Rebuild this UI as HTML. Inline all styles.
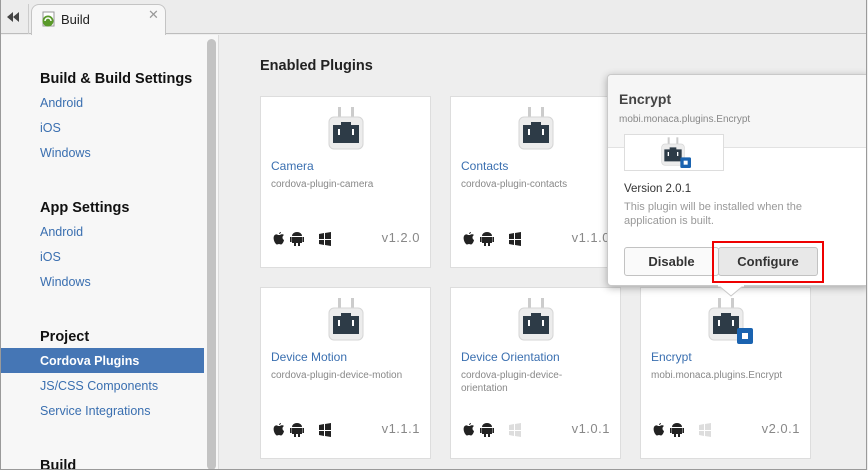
<!DOCTYPE html>
<html><head><style>
*{box-sizing:border-box;margin:0;padding:0}
body{width:868px;height:470px;overflow:hidden;font-family:"Liberation Sans",sans-serif;background:#eee;position:relative}
.win{position:absolute;left:0;top:0;width:867px;height:470px;border:1px solid #9a9a9a;border-top:none;overflow:hidden}
.tabbar{position:absolute;left:0;top:0;width:868px;height:34px;background:#ececec;border-bottom:1px solid #bdbdbd}
.tab{position:absolute;left:30px;top:4px;width:135px;height:31px;background:#f7f7f7;border:1px solid #c4c4c4;border-bottom:none;border-radius:8px 8px 0 0;transform:skewX(0)}
.side{position:absolute;left:0;top:35px;width:218px;height:435px;background:#f7f7f7;border-right:1px solid #dcdcdc}
.side h3{position:absolute;left:39px;font-size:14.5px;font-weight:bold;color:#111}
.side a{position:absolute;left:39px;font-size:12.5px;color:#3a6fb0;text-decoration:none}
.sel{position:absolute;left:0;top:313px;width:203px;height:25px;background:#4576b5}
.thumb{position:absolute;left:206px;top:4px;width:9px;height:431px;background:#c3c3c3;border-radius:5px}
.card{position:absolute;width:171px;height:172px;background:#fff;border:1px solid #ddd}
.card .t{position:absolute;left:10px;top:62px;font-size:12px;color:#3a6fb0}
.card .s{position:absolute;left:10px;top:81px;font-size:10px;color:#888;line-height:13px;width:150px}
.card .v{position:absolute;right:10px;top:133px;font-size:13px;color:#888;letter-spacing:.5px}
.card .os{position:absolute;left:11px;top:135px;width:60px;height:14px}
.plug{position:absolute;left:64px;top:8px}
.pop{position:absolute;left:606px;top:74px;width:262px;height:212px;background:#fff;border:1px solid #c9c9c9;border-radius:4px;box-shadow:0 2px 8px rgba(0,0,0,.3)}
.btn{position:absolute;top:248px;height:29px;border:1px solid #c2c2c2;border-radius:3px;font-size:13px;font-weight:bold;color:#333;text-align:center;line-height:27px}
</style></head><body>
<div class="win">
<div class="tabbar">
<svg style="position:absolute;left:5px;top:12px" width="14" height="10"><path d="M7 0v10L1 5zM13 0v10L7 5z" fill="#444"/></svg>
<div style="position:absolute;left:27px;top:4px;width:1px;height:30px;background:#ccc"></div>
<div class="tab"></div>
<svg style="position:absolute;left:40px;top:11px" width="16" height="16"><rect x="2" y="1" width="11" height="14" fill="#fff" stroke="#999"/><circle cx="7" cy="10" r="5.5" fill="#5a9a2a"/><path d="M4 10a3 3 0 0 1 6 0" stroke="#fff" stroke-width="1.5" fill="none"/></svg>
<div style="position:absolute;left:60px;top:12px;font-size:13px;color:#222">Build</div>
<div style="position:absolute;left:147px;top:7px;font-size:13px;color:#999">✕</div>
</div>
<div class="side">
<h3 style="top:36px">Build &amp; Build Settings</h3>
<a style="top:61px">Android</a><a style="top:86px">iOS</a><a style="top:111px">Windows</a>
<h3 style="top:165px">App Settings</h3>
<a style="top:190px">Android</a><a style="top:215px">iOS</a><a style="top:240px">Windows</a>
<h3 style="top:294px">Project</h3>
<div class="sel"></div>
<a style="top:319px;color:#fff;font-weight:bold">Cordova Plugins</a>
<a style="top:344px">JS/CSS Components</a><a style="top:369px">Service Integrations</a>
<h3 style="top:423px">Build</h3>
<div class="thumb"></div>
</div>
<div style="position:absolute;left:259px;top:58px;font-size:14.5px;font-weight:bold;color:#222">Enabled Plugins</div>

<svg width="0" height="0" style="position:absolute"><defs>
<g id="pl"><rect x="13" y="2" width="3" height="12" fill="#ccc"/><rect x="26" y="2" width="3" height="12" fill="#ccc"/><rect x="4" y="12" width="34" height="32" rx="5" fill="#ececec" stroke="#d6d6d6"/><path d="M8 20h8v-3h10v3h8v18H8z" fill="#2d3b47"/><rect x="13" y="24" width="2" height="6" fill="#fff"/><rect x="27" y="24" width="2" height="6" fill="#fff"/></g>
<g id="os"><path d="M6 3c-1-1-3-1-4 1-1 2 0 6 2 8 1 1 2 0 3 0s2 1 3 0c1-1 2-3 2-4-2-1-2-4 0-5-1-1-3-1-4 0zM7 2c0-1 1-2 2-2 0 1-1 2-2 2z" fill="#222"/><path d="M20 4a5 4 0 0 1 10 0zM20 5h10v6h-10zM18 5h1.6v5H18zM30.4 5H32v5h-1.6zM22 11h2v3h-2zM26 11h2v3h-2z" fill="#222"/></g>
</defs></svg>

<!-- cards -->
<div class="card" style="left:259px;top:96px"><svg class="plug" width="44" height="50"><use href="#pl"/></svg><div class="t">Camera</div><div class="s">cordova-plugin-camera</div><svg class="os" viewBox="0 0 60 14"><use href="#os"/><path d="M47 2l5-1v6h-5zM53 1l6-1v7h-6zM47 8h5v5l-5-1zM53 8h6v6l-6-1z" fill="#222"/></svg><div class="v">v1.2.0</div></div>
<div class="card" style="left:449px;top:96px"><svg class="plug" width="44" height="50"><use href="#pl"/></svg><div class="t">Contacts</div><div class="s">cordova-plugin-contacts</div><svg class="os" viewBox="0 0 60 14"><use href="#os"/><path d="M47 2l5-1v6h-5zM53 1l6-1v7h-6zM47 8h5v5l-5-1zM53 8h6v6l-6-1z" fill="#222"/></svg><div class="v">v1.1.0</div></div>
<div class="card" style="left:259px;top:287px"><svg class="plug" width="44" height="50"><use href="#pl"/></svg><div class="t">Device Motion</div><div class="s">cordova-plugin-device-motion</div><svg class="os" viewBox="0 0 60 14"><use href="#os"/><path d="M47 2l5-1v6h-5zM53 1l6-1v7h-6zM47 8h5v5l-5-1zM53 8h6v6l-6-1z" fill="#222"/></svg><div class="v">v1.1.1</div></div>
<div class="card" style="left:449px;top:287px"><svg class="plug" width="44" height="50"><use href="#pl"/></svg><div class="t">Device Orientation</div><div class="s">cordova-plugin-device-<br>orientation</div><svg class="os" viewBox="0 0 60 14"><use href="#os"/><path d="M47 2l5-1v6h-5zM53 1l6-1v7h-6zM47 8h5v5l-5-1zM53 8h6v6l-6-1z" fill="#ddd"/></svg><div class="v">v1.0.1</div></div>
<div class="card" style="left:639px;top:287px"><svg class="plug" width="60" height="60"><use href="#pl"/><rect x="32" y="32" width="16" height="16" rx="2" fill="#1a63b0"/><rect x="37" y="37" width="6" height="6" fill="#fff"/></svg><div class="t">Encrypt</div><div class="s">mobi.monaca.plugins.Encrypt</div><svg class="os" viewBox="0 0 60 14"><use href="#os"/><path d="M47 2l5-1v6h-5zM53 1l6-1v7h-6zM47 8h5v5l-5-1zM53 8h6v6l-6-1z" fill="#ddd"/></svg><div class="v">v2.0.1</div></div>

<!-- popover -->
<div class="pop">
<div style="position:absolute;left:0;top:0;width:100%;height:73px;background:#f6f6f6;border-bottom:1px solid #e2e2e2;border-radius:4px 4px 0 0"></div>
<div style="position:absolute;left:11px;top:16px;font-size:14px;font-weight:bold;color:#444">Encrypt</div>
<div style="position:absolute;left:11px;top:39px;font-size:10px;color:#888">mobi.monaca.plugins.Encrypt</div>
<div style="position:absolute;left:16px;top:59px;width:100px;height:37px;background:#fff;border:1px solid #ddd"><svg style="position:absolute;left:34px;top:1px" width="40" height="36" viewBox="0 0 60 54"><use href="#pl"/><rect x="32" y="32" width="16" height="16" rx="2" fill="#1a63b0"/><rect x="37" y="37" width="6" height="6" fill="#fff"/></svg></div>
<div style="position:absolute;left:16px;top:108px;font-size:11.5px;color:#333">Version 2.0.1</div>
<div style="position:absolute;left:16px;top:125px;font-size:11px;color:#999;line-height:14px">This plugin will be installed when the<br>application is built.</div>
<div class="btn" style="left:16px;top:172px;width:95px;background:#fafafa">Disable</div>
<div class="btn" style="left:110px;top:172px;width:100px;background:#e8e8e8">Configure</div>
<div style="position:absolute;left:104px;top:166px;width:112px;height:42px;border:2px solid #e00"></div>
</div>
<svg style="position:absolute;left:717px;top:285px" width="26" height="12"><path d="M0 0L13 11L26 0" fill="#fff" stroke="#c9c9c9"/><rect x="0" y="0" width="26" height="1.5" fill="#fff"/></svg>
</div>
</body></html>
